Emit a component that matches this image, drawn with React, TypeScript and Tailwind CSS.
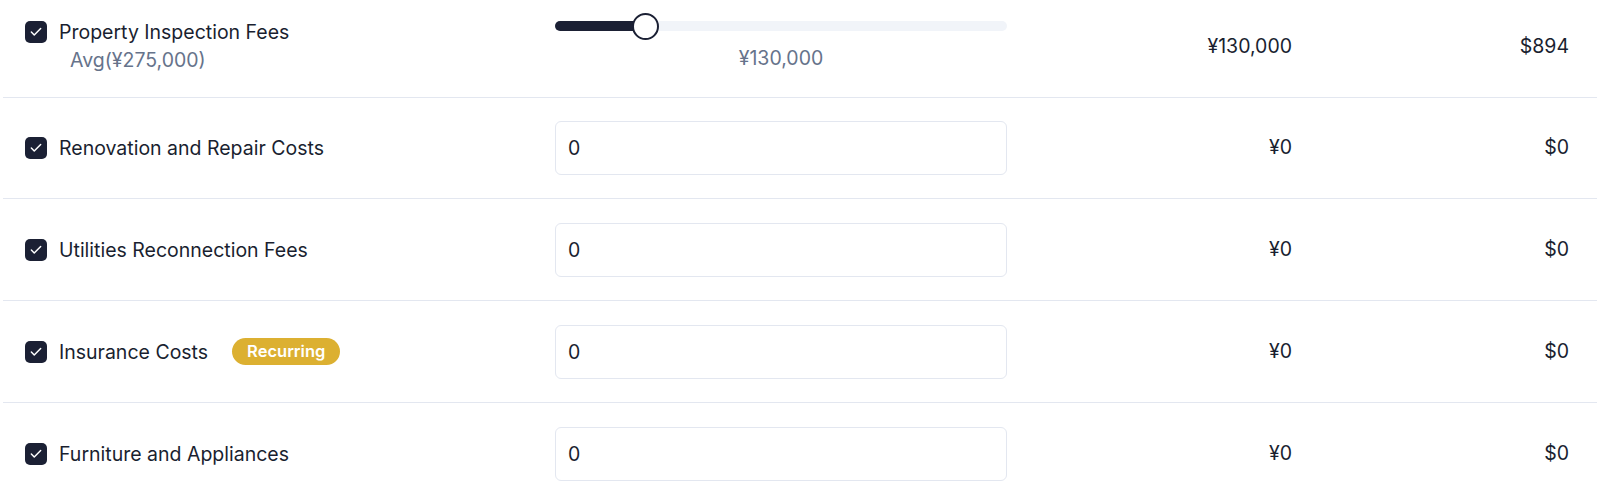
import { Check } from "lucide-react";

const rows = [
  { label: "Renovation and Repair Costs", recurring: false, h: "h-[101px]" },
  { label: "Utilities Reconnection Fees", recurring: false, h: "h-[102px]" },
  { label: "Insurance Costs", recurring: true, h: "h-[102px]" },
  { label: "Furniture and Appliances", recurring: false, h: "h-[102px]" },
];

function Box() {
  return (
    <span className="flex h-[22px] w-[22px] shrink-0 items-center justify-center rounded-[5px] bg-[#1b2034]">
      <Check className="h-[14px] w-[14px] text-white" strokeWidth={2.5} />
    </span>
  );
}

export default function App() {
  return (
    <div className="h-[504px] w-[1600px] overflow-hidden bg-white font-['Inter',sans-serif] text-[#1a1f30]">
      <div className="-mt-[4px] px-[3px]">
        {/* slider row */}
        <div className="grid h-[102px] grid-cols-[530px_496px_285px_277px] border-b border-[#e3e7f0]">
          <div className="px-[22px] pt-[25px]">
            <div className="flex h-[22px] items-center gap-[12px]">
              <Box />
              <span className="text-[19.5px] leading-6">Property Inspection Fees</span>
            </div>
            <div className="mt-[5px] pl-[45px] text-[19.5px] leading-6 text-[#66738b]">Avg(¥275,000)</div>
          </div>
          <div className="px-[22px] pt-[17px]">
            <div className="relative h-[27px]">
              <div className="absolute left-0 right-0 top-[8px] h-[10px] rounded-full bg-[#f1f4f9]" />
              <div className="absolute left-0 top-[8px] h-[10px] w-[90px] rounded-full bg-[#1b2034]" />
              <div className="absolute left-[77px] top-0 h-[27px] w-[27px] rounded-full border-2 border-[#1b2034] bg-white" />
            </div>
            <div className="mt-[6px] text-center text-[19.5px] leading-6 text-[#66738b]">¥130,000</div>
          </div>
          <div className="flex items-center justify-end px-[22px] text-[19.5px]">¥130,000</div>
          <div className="flex items-center justify-end px-[22px] text-[19.5px]">$894</div>
        </div>

        {rows.map((r) => (
          <div
            key={r.label}
            className={`grid ${r.h} grid-cols-[530px_496px_285px_277px] items-center border-b border-[#e3e7f0]`}
          >
            <div className="flex items-center gap-[12px] px-[22px]">
              <Box />
              <span className="text-[19.5px] leading-6">{r.label}</span>
              {r.recurring && (
                <span className="ml-[12px] rounded-full bg-[#dcb031] px-[15px] py-[2px] text-[16.5px] font-semibold leading-[23px] text-white">
                  Recurring
                </span>
              )}
            </div>
            <div className="px-[22px]">
              <input
                defaultValue="0"
                className="h-[54px] w-full rounded-[6px] border border-[#e3e7f0] px-[12px] text-[19.5px] text-[#1a1f30] outline-none"
              />
            </div>
            <div className="px-[22px] text-right text-[19.5px]">¥0</div>
            <div className="px-[22px] text-right text-[19.5px]">$0</div>
          </div>
        ))}
      </div>
    </div>
  );
}
